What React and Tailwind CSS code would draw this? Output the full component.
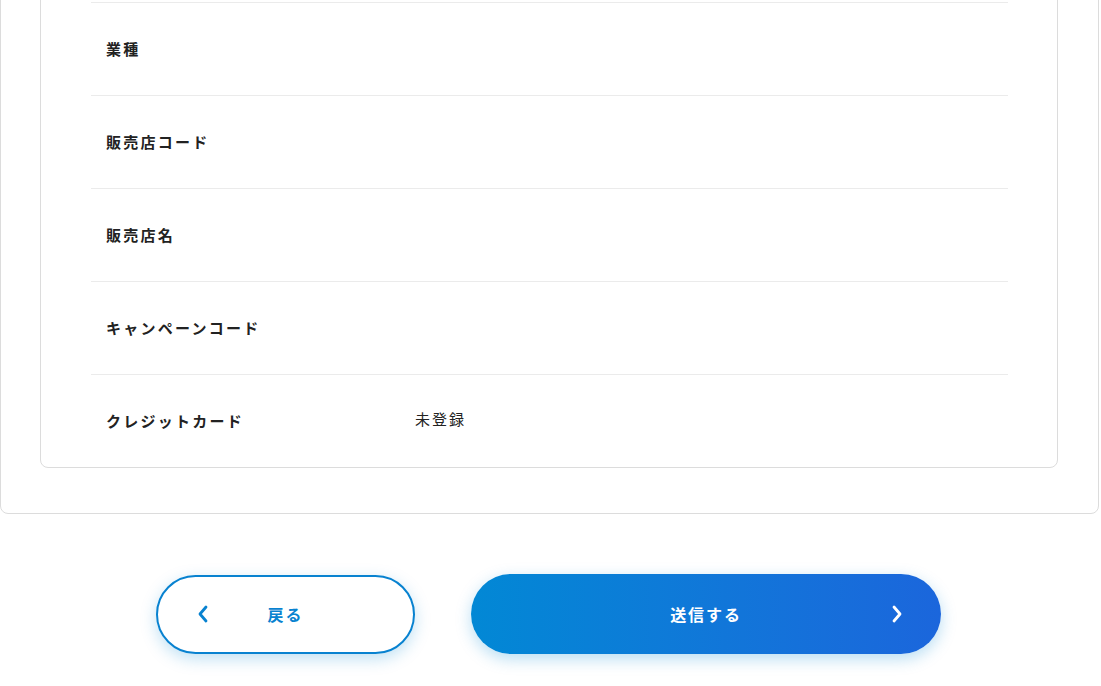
const rows = [
  { label: '', value: '' },
  { label: '業種', value: '' },
  { label: '販売店コード', value: '' },
  { label: '販売店名', value: '' },
  { label: 'キャンペーンコード', value: '' },
  { label: 'クレジットカード', value: '未登録' },
]

export default function App() {
  return (
    <div
      className="min-h-screen bg-white overflow-hidden"
      style={{ fontFamily: '"Noto Sans CJK JP", "Noto Sans", sans-serif' }}
    >
      {/* confirm card (scrolled) */}
      <div className="mt-[-109px] mr-[2px] border border-[#dcdcdc] rounded-lg pt-[16px] pl-[39px] pr-[40px] pb-[45px]">
        <div className="border border-[#dcdcdc] rounded-lg pl-[50px] pr-[49px]">
          {rows.map((row, i) => (
            <div
              key={i}
              className={`h-[93px] flex items-center pl-[15px] ${i > 0 ? 'border-t border-[#ebebeb]' : ''}`}
            >
              <div className="w-[309px] text-[15px] font-bold tracking-[0.15em] text-[#222]">{row.label}</div>
              <div className="text-[15px] tracking-[0.13em] text-[#222] -mt-1">{row.value}</div>
            </div>
          ))}
        </div>
      </div>

      {/* actions */}
      <div className="pt-[60px] flex justify-center items-center gap-[56px] pr-[4px]">
        <button className="relative w-[259px] h-[79px] rounded-full border-2 border-[#0882d0] bg-white shadow-[0_5px_16px_rgba(2,136,213,0.25)] flex items-center justify-center">
          <svg className="absolute left-[38px] top-1/2 -translate-y-1/2" width="14" height="20" viewBox="0 0 14 20">
            <polyline points="10,3 4,10 10,17" fill="none" stroke="#0882d0" strokeWidth="2.8" strokeLinecap="round" strokeLinejoin="round" />
          </svg>
          <span className="text-[16px] font-bold tracking-[0.12em] text-[#0882d0]">戻る</span>
        </button>
        <button className="relative w-[470px] h-[80px] rounded-full bg-gradient-to-r from-[#0288d5] to-[#1b66dc] shadow-[0_5px_16px_rgba(2,136,213,0.28)] flex items-center justify-center">
          <span className="text-[16px] font-bold tracking-[0.12em] text-white">送信する</span>
          <svg className="absolute right-[37px] top-1/2 -translate-y-1/2" width="14" height="20" viewBox="0 0 14 20">
            <polyline points="4,3 10,10 4,17" fill="none" stroke="#ffffff" strokeWidth="2.8" strokeLinecap="round" strokeLinejoin="round" />
          </svg>
        </button>
      </div>
    </div>
  )
}
